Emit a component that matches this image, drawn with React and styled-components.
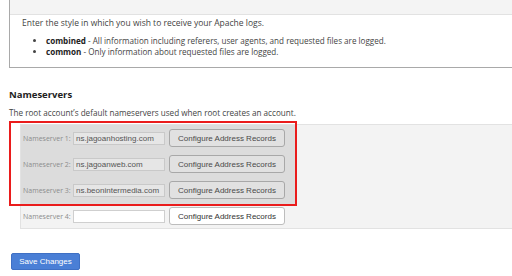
import React from "react";
import styled, { createGlobalStyle } from "styled-components";

const Global = createGlobalStyle`
  html, body { margin: 0; padding: 0; background: #fff; overflow: hidden; }
  body { font-family: "Open Sans", "Liberation Sans", sans-serif; color: #333; }
  * { box-sizing: border-box; }
`;

const Page = styled.div`
  padding-left: 9px;
  width: 512px;
`;

const LogBox = styled.section`
  margin-right: -20px;
  border: 1px solid #a9a9a9;
  border-top: none;
  padding-bottom: 10px;
`;

const BoxHeader = styled.div`
  height: 15px;
  background: #f4f4f4;
  border-bottom: 1px solid #e2e2e2;
`;

const Para = styled.p`
  margin: 2px 0 0 12px;
  font-size: 8.5px;
  line-height: 11px;
  color: #444;
`;

const List = styled.ul`
  margin: 7px 0 0 0;
  padding-left: 36px;
  font-size: 8.1px;
  line-height: 11px;
  color: #444;
  li::marker { font-size: 8px; }
  b { color: #222; font-weight: 700; }
`;

const Heading = styled.h3`
  margin: 20px 0 0 0;
  font-size: 9.5px;
  line-height: 13px;
  font-weight: 700;
  color: #222;
`;

const Desc = styled.p`
  margin: 6px 0 0 0;
  font-size: 8.15px;
  line-height: 11px;
  color: #444;
`;

const Panel = styled.div`
  margin: 6px -20px 0 11px;
  background: #f3f3f3;
  border: 1px solid #e2e2e2;
  border-right: none;
  padding-bottom: 3px;
`;

const Highlight = styled.div`
  position: relative;
  width: 276px;
  background: #dcdcdc;
  padding: 4px 0 5px 2px;
  display: flex;
  flex-direction: column;
  gap: 8px;
  &::after {
    content: "";
    position: absolute;
    top: -4px;
    left: -12px;
    right: 0;
    bottom: -2px;
    border: 2px solid #ea1c1c;
    pointer-events: none;
  }
`;

const Row = styled.div`
  display: flex;
  align-items: center;
  height: 18px;
  padding-left: ${(p) => (p.$plain ? "2px" : "0")};
  margin-top: ${(p) => (p.$plain ? "3px" : "0")};
`;

const Label = styled.label`
  width: 50px;
  font-size: 7px;
  color: #8c8c8c;
  font-family: "Open Sans", sans-serif;
  white-space: nowrap;
`;

const Input = styled.input`
  width: 92px;
  height: 13px;
  margin: 0;
  padding: 0 2px;
  font-family: "Liberation Sans", Arial, sans-serif;
  font-size: 8px;
  color: ${(p) => (p.$dim ? "#555" : "#333")};
  background: ${(p) => (p.$dim ? "#e6e6e6" : "#fff")};
  border: 1px solid ${(p) => (p.$dim ? "#c9c9c9" : "#cfcfcf")};
  border-radius: 0;
  outline: none;
`;

const ConfigButton = styled.button`
  margin-left: 4px;
  width: 116px;
  height: 18px;
  padding: 0;
  font-family: "Liberation Sans", Arial, sans-serif;
  font-size: 8px;
  color: ${(p) => (p.$dim ? "#4a4a4a" : "#333")};
  background: ${(p) => (p.$dim ? "#e1e1e1" : "#fff")};
  border: 1px solid ${(p) => (p.$dim ? "#a8a8a8" : "#bdbdbd")};
  border-radius: 3px;
`;

const SaveButton = styled.button`
  margin: 24px 0 0 2px;
  width: 69px;
  height: 17px;
  padding: 0;
  font-family: "Liberation Sans", Arial, sans-serif;
  font-size: 8px;
  color: #fff;
  background: #4a7fd6;
  border: 1px solid #3f70c4;
  border-radius: 2px;
`;

const servers = [
  "ns.jagoanhosting.com",
  "ns.jagoanweb.com",
  "ns.beonintermedia.com",
];

function NsRow({ n, value, dim, plain }) {
  return (
    <Row $plain={plain}>
      <Label>Nameserver {n}:</Label>
      <Input $dim={dim} defaultValue={value} />
      <ConfigButton $dim={dim}>Configure Address Records</ConfigButton>
    </Row>
  );
}

export default function App() {
  return (
    <Page>
      <Global />
      <LogBox>
        <BoxHeader />
        <Para>Enter the style in which you wish to receive your Apache logs.</Para>
        <List>
          <li>
            <b>combined</b> - All information including referers, user agents, and requested files are logged.
          </li>
          <li>
            <b>common</b> - Only information about requested files are logged.
          </li>
        </List>
      </LogBox>
      <Heading>Nameservers</Heading>
      <Desc>The root account’s default nameservers used when root creates an account.</Desc>
      <Panel>
        <Highlight>
          {servers.map((s, i) => (
            <NsRow key={s} n={i + 1} value={s} dim />
          ))}
        </Highlight>
        <NsRow n={4} value="" plain />
      </Panel>
      <SaveButton>Save Changes</SaveButton>
    </Page>
  );
}
